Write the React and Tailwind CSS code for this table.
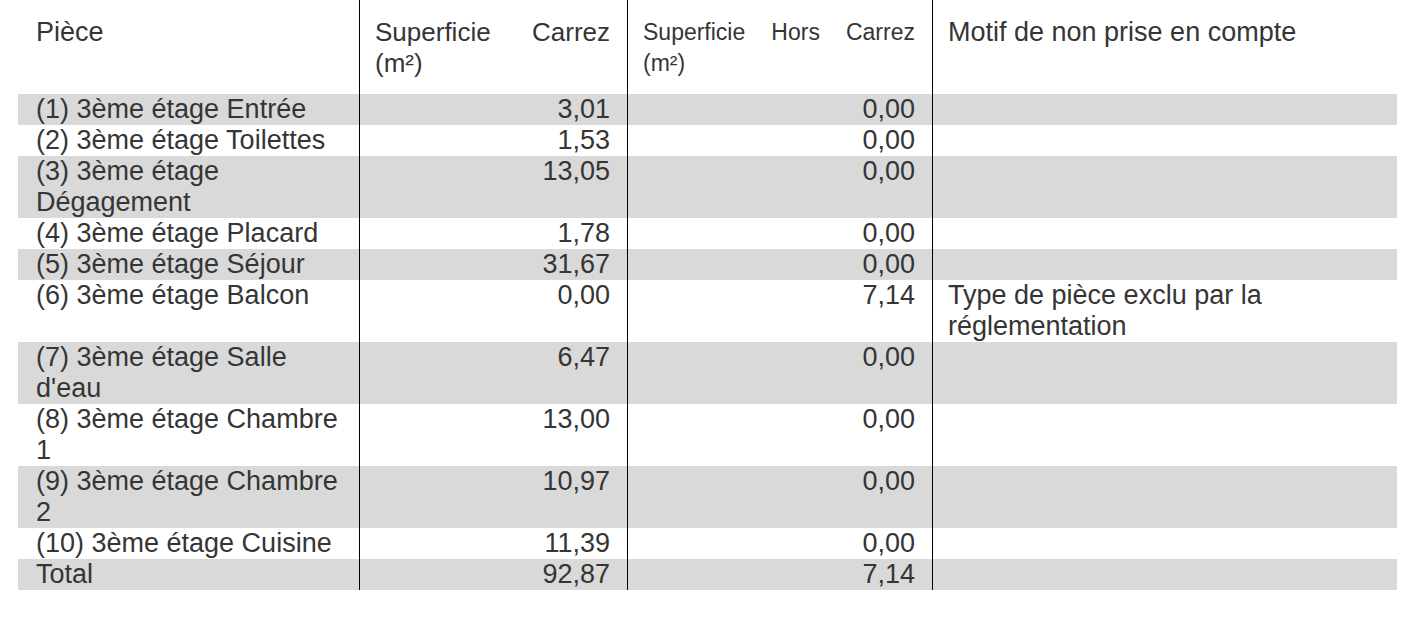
import React from "react";

const rows = [
  { piece: "(1) 3ème étage Entrée", carrez: "3,01", hors: "0,00", motif: "" },
  { piece: "(2) 3ème étage Toilettes", carrez: "1,53", hors: "0,00", motif: "" },
  { piece: "(3) 3ème étage Dégagement", carrez: "13,05", hors: "0,00", motif: "" },
  { piece: "(4) 3ème étage Placard", carrez: "1,78", hors: "0,00", motif: "" },
  { piece: "(5) 3ème étage Séjour", carrez: "31,67", hors: "0,00", motif: "" },
  {
    piece: "(6) 3ème étage Balcon",
    carrez: "0,00",
    hors: "7,14",
    motif: "Type de pièce exclu par la réglementation",
  },
  { piece: "(7) 3ème étage Salle d'eau", carrez: "6,47", hors: "0,00", motif: "" },
  { piece: "(8) 3ème étage Chambre 1", carrez: "13,00", hors: "0,00", motif: "" },
  { piece: "(9) 3ème étage Chambre 2", carrez: "10,97", hors: "0,00", motif: "" },
  { piece: "(10) 3ème étage Cuisine", carrez: "11,39", hors: "0,00", motif: "" },
  { piece: "Total", carrez: "92,87", hors: "7,14", motif: "" },
];

const App = () => {
  return (
    <div className="w-[1418px] h-[626px] bg-white text-[#353535] font-['Liberation_Sans',Arial,sans-serif] text-[27px] leading-[31px] pl-[18px]">
      <div className="grid grid-cols-[341px_268px_305px_465px]">
        {/* Header */}
        <div className="h-[94px] pt-[17px] pl-[18px] pr-[17px]">Pièce</div>
        <div className="h-[94px] pt-[17px] pl-[15px] pr-[17px] border-l border-black text-[26px]">
          <div className="flex justify-between">
            <span>Superficie</span>
            <span>Carrez</span>
          </div>
          <div>(m²)</div>
        </div>
        <div className="h-[94px] pt-[17px] pl-[15px] pr-[17px] border-l border-black text-[23px]">
          <div className="flex justify-between">
            <span>Superficie</span>
            <span>Hors</span>
            <span>Carrez</span>
          </div>
          <div>(m²)</div>
        </div>
        <div className="h-[94px] pt-[17px] pl-[15px] pr-[17px] border-l border-black">
          Motif de non prise en compte
        </div>

        {/* Body rows */}
        {rows.map((row, i) => {
          const bg = i % 2 === 0 ? "bg-[#d9d9d9]" : "bg-white";
          return (
            <React.Fragment key={i}>
              <div className={`${bg} pl-[18px] pr-[17px]`}>{row.piece}</div>
              <div className={`${bg} pl-[15px] pr-[17px] border-l border-black text-right`}>
                {row.carrez}
              </div>
              <div className={`${bg} pl-[15px] pr-[17px] border-l border-black text-right`}>
                {row.hors}
              </div>
              <div className={`${bg} pl-[15px] pr-[17px] border-l border-black`}>
                {row.motif}
              </div>
            </React.Fragment>
          );
        })}
      </div>
    </div>
  );
};

export default App;
